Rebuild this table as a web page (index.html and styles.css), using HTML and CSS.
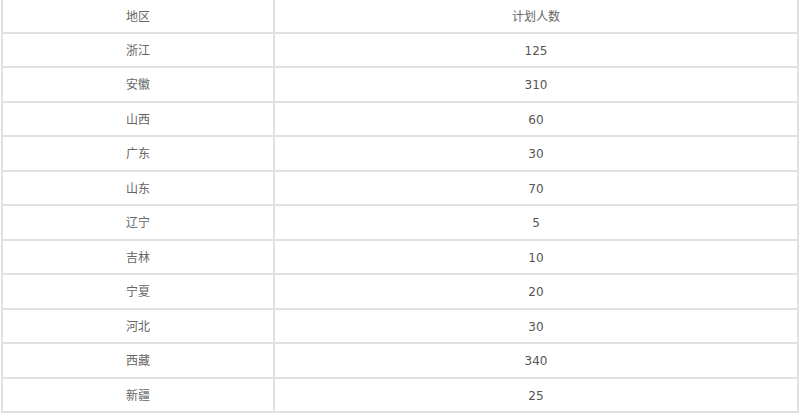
FILE: index.html
```html
<!DOCTYPE html>
<html lang="zh-CN">
<head>
<meta charset="utf-8">
<title>计划人数</title>
<link rel="stylesheet" href="styles.css">
</head>
<body>
<table class="plan">
  <thead>
    <tr><th class="c1">地区</th><th class="c2">计划人数</th></tr>
  </thead>
  <tbody>
    <tr><td class="c1">浙江</td><td class="c2 num">125</td></tr>
    <tr><td class="c1">安徽</td><td class="c2 num">310</td></tr>
    <tr><td class="c1">山西</td><td class="c2 num">60</td></tr>
    <tr><td class="c1">广东</td><td class="c2 num">30</td></tr>
    <tr><td class="c1">山东</td><td class="c2 num">70</td></tr>
    <tr><td class="c1">辽宁</td><td class="c2 num">5</td></tr>
    <tr><td class="c1">吉林</td><td class="c2 num">10</td></tr>
    <tr><td class="c1">宁夏</td><td class="c2 num">20</td></tr>
    <tr><td class="c1">河北</td><td class="c2 num">30</td></tr>
    <tr><td class="c1">西藏</td><td class="c2 num">340</td></tr>
    <tr><td class="c1">新疆</td><td class="c2 num">25</td></tr>
  </tbody>
</table>
</body>
</html>
```
FILE: styles.css
```css
html, body {
  margin: 0;
  padding: 0;
  background: #ffffff;
}
body {
  padding-left: 1px;
  font-family: "DejaVu Sans", "Noto Sans CJK SC", sans-serif;
  font-size: 12px;
  color: #666666;
}
.plan {
  width: 798px;
  border-collapse: separate;
  border-spacing: 0;
  table-layout: fixed;
}
.plan th,
.plan td {
  padding: 3px 0 0 0;
  text-align: center;
  font-weight: normal;
  line-height: 29.5px;
  border-bottom: 2px solid #e1e1e1;
  border-right: 2px solid #e1e1e1;
  white-space: nowrap;
}
.plan th {
  line-height: 28.5px;
}
.plan .c1 {
  width: 270px;
  border-left: 2px solid #e1e1e1;
}
.plan .num {
  color: #555555;
}
```
